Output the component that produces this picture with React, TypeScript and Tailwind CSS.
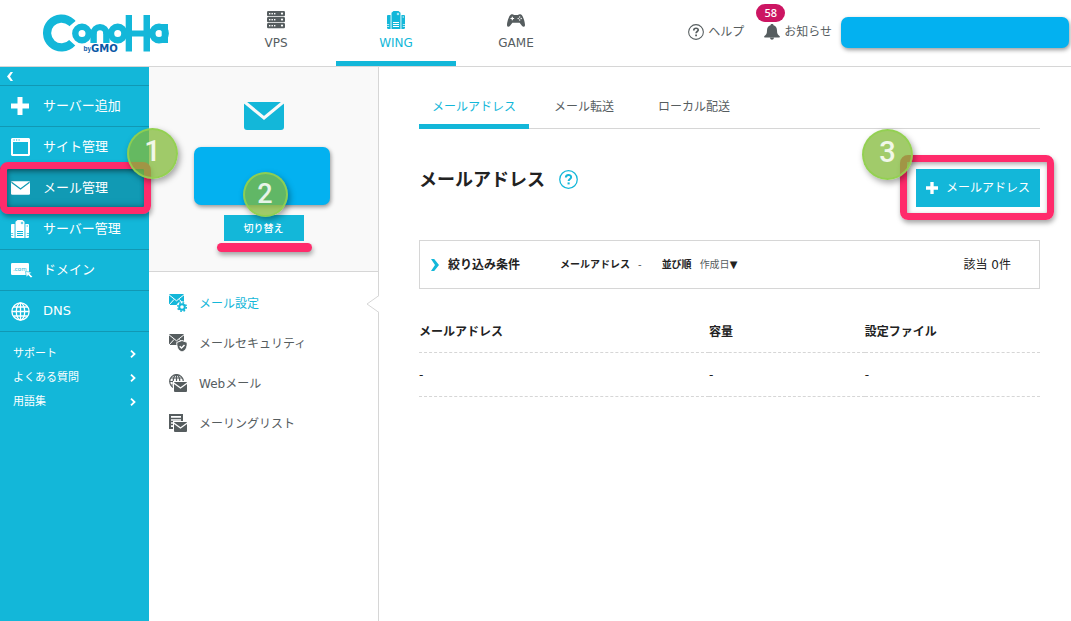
import type { ReactNode } from 'react';

type IconProps = { className?: string };

function Logo() {
  return (
    <svg viewBox="0 0 126 40" className="h-10 w-[126px]" role="img" aria-label="ConoHa by GMO">
      <g fill="none" stroke="#13b7d9">
        <circle cx="18.5" cy="20" r="14.4" strokeWidth="8.2" strokeDasharray="69.4 21.1" transform="rotate(42 18.5 20)" />
        <circle cx="39" cy="20.5" r="6.7" strokeWidth="6.4" />
        <circle cx="57" cy="20.500" r="6.400" strokeWidth="6.400" strokeDasharray="20.100 20.100" transform="rotate(180 57 20.500)" />
        <circle cx="74.700" cy="20.500" r="6.700" strokeWidth="6.400" />
        <circle cx="116" cy="20.500" r="6.700" strokeWidth="6.400" />
      </g>
      <g fill="#13b7d9">
        <rect x="47.400" y="20" width="6.400" height="10" />
        <rect x="60.200" y="20" width="6.400" height="10" />
        <rect x="82.700" y="2" width="6.300" height="36.500" />
        <rect x="100.500" y="2" width="6.500" height="36.500" />
        <rect x="79" y="17.500" width="32" height="6" />
        <rect x="118.700" y="11" width="6.300" height="19" />
      </g>
      <g stroke="#fff" strokeWidth="1.600" fill="#0a57a5" paintOrder="stroke" fontWeight="700">
        <text x="40.500" y="38" fontSize="6.500" fontFamily="Liberation Sans, sans-serif">by</text>
        <text x="48" y="38.500" fontSize="10" fontFamily="DejaVu Sans, sans-serif">GMO</text>
      </g>
    </svg>
  );
}

function ServerIcon() {
  return (
    <svg viewBox="0 0 18 18" className="size-[18px]" aria-hidden="true">
      {[0, 6, 12].map((y) => (
        <g key={y}>
          <rect y={y} width="18" height="5.2" rx="1.2" fill="#565d5f" />
          <rect x="2" y={y + 2} width="1.4" height="1.4" fill="#fff" />
          <rect x="4.5" y={y + 2} width="1.4" height="1.4" fill="#fff" />
          <rect x="7" y={y + 2} width="1.4" height="1.4" fill="#fff" />
          <circle cx="15" cy={y + 2.6} r="1.1" fill="#fff" />
        </g>
      ))}
    </svg>
  );
}

function WingIcon({ line }: { line: string }) {
  return (
    <svg viewBox="0 0 18 18" className="size-[18px]" aria-hidden="true" fill="currentColor">
      <path d="M4.500 18V1.800L6.500 0h5l2 1.800V18z" />
      <path d="M0 4.500 1 4h2.600v14H1l-1-.8zM14.400 4H17l1 .5v12.700l-1 .8h-2.600z" />
      <g stroke={line} strokeWidth="1" fill="none">
        <path d="M6 11.500h6M6 13.500h6M6 15.500h6" />
        <path d="M0 13.500h2.200M0 15.500h2.200M15.800 13.500H18M15.800 15.500H18" strokeWidth=".7" />
        <path d="M11 1.800v2.400M9.800 3h2.400M16.200 5.200v1.600" strokeWidth="0.800" />
      </g>
    </svg>
  );
}

function GameIcon() {
  return (
    <svg viewBox="0 0 18 13" className="h-[13px] w-[18px]" aria-hidden="true">
      <path
        d="M4 .6C4.600 .1 6.400 .1 7 .9h4c.6-.8 2.400-.8 3-.3C16 1.500 18 8 18 11c0 2.200-2 2.200-3.100.7L12.600 8.800H5.400L3.100 11.700C2 13.200 0 13.200 0 11 0 8 2 1.500 4 .6z"
        fill="#565d5f"
      />
      <path d="M5.300 2.700v3.600M3.500 4.500h3.600" stroke="#fff" strokeWidth="1.200" />
      <g fill="#fff">
        <circle cx="12.700" cy="3" r=".7" />
        <circle cx="12.700" cy="6" r=".7" />
        <circle cx="11.200" cy="4.500" r=".7" />
        <circle cx="14.200" cy="4.500" r=".7" />
      </g>
    </svg>
  );
}

function HelpIcon({ className }: IconProps) {
  return (
    <svg viewBox="0 0 18 18" className={className} fill="none" stroke="currentColor" aria-hidden="true">
      <circle cx="9" cy="9" r="8.300" strokeWidth="1.200" />
      <path d="M6.500 7.200c0-3.200 5-3.200 5-.4 0 1.700-2.400 1.700-2.400 3.700" strokeWidth="1.900" />
      <path d="M8.100 12.700h2" strokeWidth="1.900" />
    </svg>
  );
}

function BellIcon() {
  return (
    <svg viewBox="0 0 16 16" className="size-4" fill="#565d5f" aria-hidden="true">
      <path d="M8 0c.9 0 1.500.5 1.500 1.300C12 2 13 4 13 6.500c0 3 .8 4.300 2.500 5.500.5.400.5 1.500-.2 1.500H.7c-.7 0-.7-1.100-.2-1.500C2.200 10.800 3 9.500 3 6.500 3 4 4 2 6.500 1.300 6.500.500 7.100 0 8 0zM6 13.800h4c-.3 2.600-3.700 2.600-4 0z" />
    </svg>
  );
}

function PlusIcon({ className }: IconProps) {
  return (
    <svg viewBox="0 0 18 18" className={className} fill="currentColor" aria-hidden="true">
      <path d="M6.500 0h5v6.500H18v5h-6.500V18h-5v-6.500H0v-5h6.500z" />
    </svg>
  );
}

function WindowIcon() {
  return (
    <svg viewBox="0 0 19 18" className="h-[18px] w-[19px]" aria-hidden="true">
      <path fill="#fff" fillRule="evenodd" d="M1 0h17l1 1v16l-1 1H1l-1-1V1zm1 4v12h15V4z" />
      <path d="M2.500 2h1.200M5 2h1.200M7.500 2h1.200" stroke="#13b7d9" strokeWidth="1.200" />
    </svg>
  );
}

function MailIcon() {
  return (
    <svg viewBox="0 0 19 14" className="h-[14px] w-[19px]" aria-hidden="true">
      <rect y=".3" width="19" height="13.500" rx="1.200" fill="#fff" />
      <path d="M.5 1.200 9.500 8l9-6.800" fill="none" stroke="#119ab4" strokeWidth="1.300" />
    </svg>
  );
}

function DomainIcon() {
  return (
    <svg viewBox="0 0 22 16" className="h-4 w-[22px] shrink-0" aria-hidden="true">
      <rect y="1" width="18" height="12" rx="1.200" fill="#fff" />
      <text x="2" y="9" fontSize="5.500" fill="#13b7d9" fontFamily="DejaVu Sans, sans-serif">.com</text>
      <path d="m14.500 9.500 6 .7-1.700 1.700 2.700 2.600-1.500 1.500-2.700-2.700-1.900 1.700z" fill="#fff" stroke="#13b7d9" strokeWidth=".6" />
    </svg>
  );
}

function GlobeIcon() {
  return (
    <svg viewBox="0 0 19 19" className="size-[19px]" fill="none" stroke="#fff" strokeWidth="1.300" aria-hidden="true">
      <circle cx="9.500" cy="9.500" r="8.600" />
      <ellipse cx="9.500" cy="9.500" rx="4.200" ry="8.600" />
      <path d="M9.500 1v17M1 9.500h17M2.300 5h14.400M2.300 14h14.400" />
    </svg>
  );
}

function SmallMail({ x, y }: { x: number; y: number }) {
  return (
    <g transform={`translate(${x} ${y})`}>
      <rect x="-1" y="-1" width="15" height="12" fill="#fff" />
      <rect width="13" height="10" rx="1" fill="currentColor" />
      <path d="M0 1.200 6.500 6 13 1.200" fill="none" stroke="#fff" strokeWidth="1.400" />
    </g>
  );
}

function MailBase() {
  return (
    <>
      <rect width="15" height="11" rx="1" fill="currentColor" />
      <path d="M0 .8 7.500 6.800 15 .8M0 11l5-5.500M15 11l-4.500-5.500" fill="none" stroke="#fff" strokeWidth="1" />
    </>
  );
}

function MailGearIcon() {
  return (
    <svg viewBox="0 0 18 18" className="size-[18px]" aria-hidden="true">
      <MailBase />
      <circle cx="13" cy="13" r="5.800" fill="#fff" />
      <circle cx="13" cy="13" r="2.800" fill="none" stroke="currentColor" strokeWidth="2" />
      <circle cx="13" cy="13" r="4.300" fill="none" stroke="currentColor" strokeWidth="1.500" strokeDasharray="1.700 1.677" />
    </svg>
  );
}

function MailShieldIcon() {
  return (
    <svg viewBox="0 0 18 18" className="size-[18px]" aria-hidden="true">
      <MailBase />
      <path d="m13 6.500 5.200 1.900c.3 5.200-1.600 8.100-5.200 9.600-3.600-1.500-5.500-4.400-5.200-9.600z" fill="currentColor" stroke="#fff" strokeWidth="1" />
      <path d="m10.700 12.300 1.800 1.800 3-3.200" fill="none" stroke="#fff" strokeWidth="1.400" />
    </svg>
  );
}

function WebMailIcon() {
  return (
    <svg viewBox="0 0 18 18" className="size-[18px]" aria-hidden="true">
      <g fill="none" stroke="currentColor" strokeWidth="1.200">
        <circle cx="7.500" cy="7.500" r="6.800" />
        <ellipse cx="7.500" cy="7.500" rx="3.300" ry="6.800" />
        <path d="M7.500.7v13.600M.7 7.500h13.600M1.600 4h11.800M1.600 11h11.800" />
      </g>
      <SmallMail x={5} y={8} />
    </svg>
  );
}

function ListMailIcon() {
  return (
    <svg viewBox="0 0 18 18" className="size-[18px]" aria-hidden="true">
      <path d="M1 1h12v13H1z" fill="none" stroke="currentColor" strokeWidth="2" />
      <path d="M2 4.500h10M2 7.500h10M2 10.500h4" stroke="currentColor" strokeWidth="1.500" />
      <SmallMail x={5} y={8} />
    </svg>
  );
}

function Chevron({ className }: IconProps) {
  return (
    <svg viewBox="0 0 8 12" className={className} fill="currentColor" aria-hidden="true">
      <path d="M0 0h3.200L8 6l-4.800 6H0l4-6z" />
    </svg>
  );
}

function ThinChevron() {
  return (
    <svg viewBox="0 0 6 8" className="h-2 w-[6px]" fill="none" stroke="currentColor" strokeWidth="1.800" aria-hidden="true">
      <path d="m1 .7 3.500 3.300L1 7.300" />
    </svg>
  );
}

function StepBadge({ n, className }: { n: number; className: string }) {
  return (
    <span
      className={`pointer-events-none absolute z-20 flex items-center justify-center rounded-full border-2 border-[#92d050]/90 bg-[#82b938]/75 font-[Roboto,sans-serif] font-medium text-white/85 shadow-[2px_3px_6px_rgba(0,0,0,0.35)] ${className}`}
    >
      {n}
    </span>
  );
}

function ProductTab({ icon, label, active }: { icon: ReactNode; label: string; active?: boolean }) {
  return (
    <a
      href="#"
      className={`flex w-[120px] flex-col items-center border-b-[5px] pt-[10px] text-[12px] leading-4 ${
        active ? 'border-[#13b7d9] text-[#13b7d9]' : 'border-transparent text-[#565d5f]'
      }`}
    >
      <span className="mb-[5px] flex h-5 items-center">{icon}</span>
      {label}
    </a>
  );
}

const sideItems: { label: string; icon: ReactNode; active?: boolean }[] = [
  { label: 'サーバー追加', icon: <PlusIcon className="size-[18px]" /> },
  { label: 'サイト管理', icon: <WindowIcon /> },
  { label: 'メール管理', icon: <MailIcon />, active: true },
  { label: 'サーバー管理', icon: <WingIcon line="#13b7d9" /> },
  { label: 'ドメイン', icon: <DomainIcon /> },
  { label: 'DNS', icon: <GlobeIcon /> },
];

const subItems: { label: string; icon: ReactNode; active?: boolean }[] = [
  { label: 'メール設定', icon: <MailGearIcon />, active: true },
  { label: 'メールセキュリティ', icon: <MailShieldIcon /> },
  { label: 'Webメール', icon: <WebMailIcon /> },
  { label: 'メーリングリスト', icon: <ListMailIcon /> },
];

export default function App() {
  return (
    <div className="flex min-h-screen flex-col bg-white font-['DejaVu_Sans','Noto_Sans_CJK_JP',sans-serif] text-[12px] text-[#222]">
      <header className="flex h-[67px] border-b border-[#d6d6d6]">
        <a href="#" className="ml-[43px] mr-[47px] mt-[13px] shrink-0">
          <Logo />
        </a>
        <nav className="flex">
          <ProductTab icon={<ServerIcon />} label="VPS" />
          <ProductTab icon={<WingIcon line="#fff" />} label="WING" active />
          <ProductTab icon={<GameIcon />} label="GAME" />
        </nav>
        <div className="ml-auto flex h-16 items-center pr-[2px] text-[#565d5f]">
          <a href="#" className="flex items-center gap-1">
            <HelpIcon className="size-4" />
            ヘルプ
          </a>
          <a href="#" className="relative ml-5 flex items-center gap-1">
            <BellIcon />
            お知らせ
            <span className="absolute -top-[19px] -left-2 flex h-[18px] w-[29px] items-center justify-center rounded-full bg-[#cc1562] font-['Noto_Sans',sans-serif] text-[11px] font-medium text-white">
              58
            </span>
          </a>
          <div className="ml-[9px] h-[31px] w-[228px] rounded-[7px] bg-[#03b1f0] shadow-[1px_2px_4px_rgba(0,0,0,0.4)]" />
        </div>
      </header>

      <div className="flex flex-1">
        <aside className="w-[149px] shrink-0 bg-[#13b7d9] text-white">
          <button type="button" aria-label="メニューを閉じる" className="flex h-[19px] w-full items-center border-b border-[#1198b4] pl-[7px]">
            <Chevron className="h-[11px] w-[6px] rotate-180" />
          </button>
          <nav>
            {sideItems.map((item) => (
              <div key={item.label} className="relative">
                <a
                  href="#"
                  className={`flex h-[41px] items-center gap-3 border-b border-[#1198b4] pl-[11px] text-[13px] ${
                    item.active ? 'bg-[#119ab4] shadow-[inset_0_0_8px_rgba(0,0,0,0.35)]' : ''
                  }`}
                >
                  <span className="flex w-5 items-center">{item.icon}</span>
                  {item.label}
                </a>
                {item.active && (
                  <>
                    <span className="pointer-events-none absolute -top-[6px] left-0 z-10 h-[52px] w-[151px] rounded-lg border-[7px] border-[#ff2b6b] shadow-[1px_3px_5px_rgba(0,0,0,0.35),inset_1px_2px_5px_rgba(0,0,0,0.35)]" />
                    <StepBadge n={1} className="-top-10 left-[127px] size-[51px] pb-1 text-[29px]" />
                  </>
                )}
              </div>
            ))}
          </nav>
          <ul className="pt-[10px] text-[11px]">
            {['サポート', 'よくある質問', '用語集'].map((label) => (
              <li key={label}>
                <a href="#" className="flex h-6 items-center justify-between pr-[13px] pl-[13px]">
                  {label}
                  <ThinChevron />
                </a>
              </li>
            ))}
          </ul>
        </aside>

        <section className="relative w-[230px] shrink-0 border-r border-[#d6d6d6]">
          <div className="flex flex-col items-center border-b border-[#d6d6d6] bg-[#f9f9f9] pt-[35px] pb-[30px]">
            <svg viewBox="0 0 40 28" className="h-7 w-10" aria-hidden="true">
              <rect width="40" height="28" rx="3" fill="#13b7d9" />
              <path d="M0-.5 20 16 40-.5" fill="none" stroke="#f9f9f9" strokeWidth="3.200" />
            </svg>
            <div className="relative mt-[17px] mr-1 h-[58px] w-[136px] rounded-[7px] bg-[#03b1f0] shadow-[1px_2px_4px_rgba(0,0,0,0.4)]">
              <StepBadge n={2} className="top-[25px] left-[49px] size-[45px] text-[27px]" />
            </div>
            <div className="relative mt-[10px]">
              <button type="button" className="flex h-[26px] w-20 items-center justify-center bg-[#13b7d9] text-[10px] font-medium text-white">
                切り替え
              </button>
              <span className="absolute top-7 -left-[7px] h-[9px] w-[95px] rounded-full bg-[#ff2b6b] shadow-[1px_3px_5px_rgba(0,0,0,0.35)]" />
            </div>
          </div>
          <ul className="pt-[11px]">
            {subItems.map((item) => (
              <li key={item.label}>
                <a
                  href="#"
                  className={`relative flex h-10 items-center gap-3 pl-5 ${item.active ? 'text-[#13b7d9]' : 'text-[#565d5f]'}`}
                >
                  {item.icon}
                  <span className="pt-[2px]">{item.label}</span>
                  {item.active && (
                    <svg viewBox="0 0 13 18" className="absolute top-3 -right-px h-[18px] w-[13px]" aria-hidden="true">
                      <path d="M13 .5 1 9l12 8.500" fill="#fff" stroke="#d6d6d6" />
                    </svg>
                  )}
                </a>
              </li>
            ))}
          </ul>
        </section>

        <main className="min-w-0 flex-1 pr-[31px] pl-10">
          <nav className="flex text-center leading-5 text-[#565d5f] shadow-[inset_0_-1px_0_#d6d6d6]">
            {['メールアドレス', 'メール転送', 'ローカル配送'].map((label, i) => (
              <a
                key={label}
                href="#"
                className={`w-[110px] border-b-[5px] pt-[30px] pb-[7px] ${
                  i === 0 ? 'border-[#13b7d9] text-[#13b7d9]' : 'border-transparent'
                }`}
              >
                {label}
              </a>
            ))}
          </nav>

          <div className="mt-10 flex h-[38px] items-center">
            <h1 className="pb-4 text-[18px] leading-6 font-bold">メールアドレス</h1>
            <button type="button" aria-label="ヘルプ" className="mb-[17px] ml-[14px] text-[#13b7d9]">
              <HelpIcon className="size-[19px]" />
            </button>
            <div className="relative ml-auto">
              <button type="button" className="flex h-[38px] w-[124px] items-center justify-center gap-2 bg-[#13b7d9] text-white">
                <PlusIcon className="size-3" />
                メールアドレス
              </button>
              <span className="pointer-events-none absolute -top-[14px] -left-4 z-10 h-[65px] w-[154px] rounded-lg border-[7px] border-[#ff2b6b] shadow-[1px_3px_5px_rgba(0,0,0,0.35),inset_1px_2px_5px_rgba(0,0,0,0.35)]" />
              <StepBadge n={3} className="-top-10 -left-[54px] size-[51px] pb-1 text-[29px]" />
            </div>
          </div>

          <div className="mt-[33px] flex h-[49px] items-center border border-[#d6d6d6] pr-7 pl-[11px]">
            <button type="button" className="flex items-center gap-[9px] font-bold">
              <Chevron className="h-3 w-2 text-[#13b7d9]" />
              絞り込み条件
            </button>
            <dl className="ml-10 flex gap-2 text-[10px]">
              <dt className="font-bold">メールアドレス</dt>
              <dd className="mr-3 text-[#565d5f]">-</dd>
              <dt className="font-bold">並び順</dt>
              <dd className="text-[#565d5f]">
                作成日<span className="text-[#222]">▼</span>
              </dd>
            </dl>
            <p className="ml-auto">該当 0件</p>
          </div>

          <table className="w-full table-fixed border-collapse text-left leading-5">
            <thead>
              <tr className="border-b border-dashed border-[#d6d6d6]">
                <th className="w-[46.7%] pt-[33px] pb-[10px] font-bold">メールアドレス</th>
                <th className="w-[25.1%] pt-[33px] pb-[10px] font-bold">容量</th>
                <th className="pt-[33px] pb-[10px] font-bold">設定ファイル</th>
              </tr>
            </thead>
            <tbody>
              <tr className="border-b border-dashed border-[#d6d6d6]">
                <td className="pt-3 pb-[11px]">-</td>
                <td className="pt-3 pb-[11px]">-</td>
                <td className="pt-3 pb-[11px]">-</td>
              </tr>
            </tbody>
          </table>
        </main>
      </div>
    </div>
  );
}
